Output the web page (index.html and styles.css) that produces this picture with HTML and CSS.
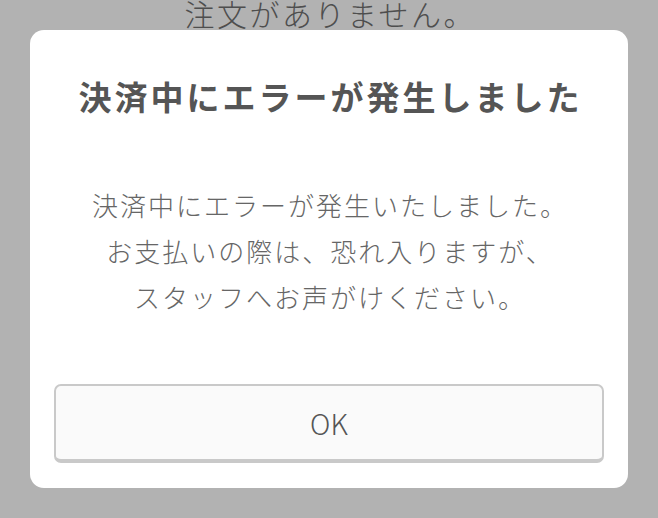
FILE: index.html
```html
<!doctype html>
<html lang="ja">
    <head>
        <meta charset="UTF-8" />
        <title>決済エラー</title>
        <link rel="stylesheet" href="styles.css">
    </head>
    <body>
        <div class="page-message">注文がありません。</div>

        <div class="dialog">
            <h1 class="dialog-title">決済中にエラーが発生しました</h1>
            <p class="dialog-body">
                決済中にエラーが発生いたしました。<br>
                お支払いの際は、恐れ入りますが、<br>
                スタッフへお声がけください。
            </p>
            <button class="dialog-button" type="button">OK</button>
        </div>
    </body>
</html>
```

FILE: styles.css
```css
:root {
    --overlay-bg: #b2b2b2;
    --dialog-bg: #ffffff;
    --title-color: #555555;
    --text-color: #666666;
    --button-bg: #fafafa;
    --button-border: #c9c9c9;
}

body {
    margin: 0;
    background-color: var(--overlay-bg);
    font-family: "Noto Sans CJK JP", "Noto Sans", sans-serif;
    overflow: hidden;
}

.page-message {
    height: 30px;
    line-height: 27px;
    font-size: 30px;
    letter-spacing: 2.5px;
    padding-left: 2.5px;
    text-align: center;
    color: #4e4e4e;
    font-weight: 300;
}

.dialog {
    margin: 0 30px;
    background-color: var(--dialog-bg);
    border-radius: 14px;
    padding: 46px 24px 25px;
    display: flex;
    flex-direction: column;
}

.dialog-title {
    margin: 0;
    font-size: 33px;
    line-height: 40px;
    font-weight: 700;
    letter-spacing: 3px;
    padding-left: 3px;
    text-align: center;
    color: var(--title-color);
}

.dialog-body {
    margin: 66px 0 64px;
    font-size: 26px;
    line-height: 46px;
    letter-spacing: 2px;
    padding-left: 2px;
    font-weight: 300;
    text-align: center;
    color: var(--text-color);
}

.dialog-button {
    height: 79px;
    background-color: var(--button-bg);
    border: 2px solid var(--button-border);
    border-bottom-width: 4px;
    border-radius: 7px;
    font-family: inherit;
    font-size: 28px;
    font-weight: 300;
    color: var(--title-color);
    padding: 0;
}
```
